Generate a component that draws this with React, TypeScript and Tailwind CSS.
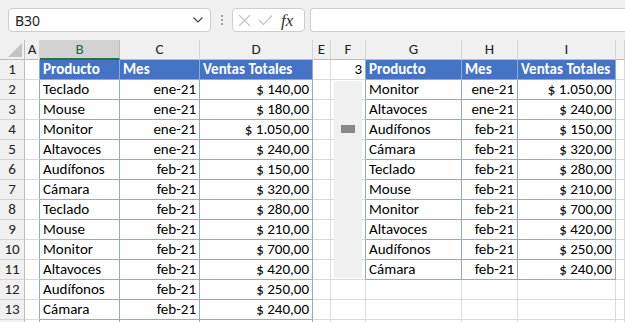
import React from "react";

const COLS = [25, 15, 80, 80, 113, 18, 35, 96, 56, 98];
const COL_LETTERS = ["", "A", "B", "C", "D", "E", "F", "G", "H", "I", ""];

const left: [string, string, string][] = [
  ["Teclado", "ene-21", "$ 140,00"],
  ["Mouse", "ene-21", "$ 180,00"],
  ["Monitor", "ene-21", "$ 1.050,00"],
  ["Altavoces", "ene-21", "$ 240,00"],
  ["Audífonos", "feb-21", "$ 150,00"],
  ["Cámara", "feb-21", "$ 320,00"],
  ["Teclado", "feb-21", "$ 280,00"],
  ["Mouse", "feb-21", "$ 210,00"],
  ["Monitor", "feb-21", "$ 700,00"],
  ["Altavoces", "feb-21", "$ 420,00"],
  ["Audífonos", "feb-21", "$ 250,00"],
  ["Cámara", "feb-21", "$ 240,00"],
];
const right: [string, string, string][] = [
  ["Monitor", "ene-21", "$ 1.050,00"],
  ["Altavoces", "ene-21", "$ 240,00"],
  ["Audífonos", "feb-21", "$ 150,00"],
  ["Cámara", "feb-21", "$ 320,00"],
  ["Teclado", "feb-21", "$ 280,00"],
  ["Mouse", "feb-21", "$ 210,00"],
  ["Monitor", "feb-21", "$ 700,00"],
  ["Altavoces", "feb-21", "$ 420,00"],
  ["Audífonos", "feb-21", "$ 250,00"],
  ["Cámara", "feb-21", "$ 240,00"],
];
const HDR = ["Producto", "Mes", "Ventas Totales"];

const inLeft = (r: number, c: number) => c >= 2 && c <= 4 && r >= 1 && r <= 14;
const inRight = (r: number, c: number) => c >= 7 && c <= 9 && r >= 1 && r <= 11;
const inT = (r: number, c: number) => inLeft(r, c) || inRight(r, c);

function cellContent(r: number, c: number): { text: string; align: "l" | "r"; bold?: boolean } | null {
  if (inLeft(r, c)) {
    const k = c - 2;
    if (r === 1) return { text: HDR[k], align: "l", bold: true };
    const row = left[r - 2];
    if (!row) return null;
    return { text: row[k], align: k === 0 ? "l" : "r" };
  }
  if (inRight(r, c)) {
    const k = c - 7;
    if (r === 1) return { text: HDR[k], align: "l", bold: true };
    const row = right[r - 2];
    if (!row) return null;
    return { text: row[k], align: k === 0 ? "l" : "r" };
  }
  if (r === 1 && c === 6) return { text: "3", align: "r" };
  return null;
}

const FONT = { fontFamily: "Calibri, Carlito, Lato, 'Liberation Sans', sans-serif" };

function Cell({ r, c }: { r: number; c: number }) {
  const content = cellContent(r, c);
  const hdr = inT(r, c) && r === 1;
  const rBlue = inT(r, c) || inT(r, c + 1);
  const bBlue = inT(r, c) || inT(r + 1, c);
  return (
    <div
      className={
        "h-[20px] border-r border-b overflow-hidden whitespace-nowrap text-[15px] leading-[19px] px-[3px] " +
        (rBlue ? "border-r-[#8ea9db] " : "border-r-[#dadada] ") +
        (bBlue ? "border-b-[#8ea9db] " : "border-b-[#dadada] ") +
        (hdr ? "bg-[#4472c4] text-white font-bold " : "bg-white text-black ") +
        (content?.align === "r" ? "text-right" : "text-left")
      }
      style={FONT}
    >
      {content?.text ?? ""}
    </div>
  );
}

function ColHeader({ c }: { c: number }) {
  if (c === 0) {
    return (
      <div className="relative h-[20px] border-r border-b border-r-[#bdbdbd] border-b-[#bdbdbd] bg-[#f0f0f0]">
        <svg className="absolute right-[2px] bottom-[2px]" width="14" height="14" viewBox="0 0 14 14">
          <polygon points="14,0 14,14 0,14" fill="#c3c3c3" />
        </svg>
      </div>
    );
  }
  const sel = c === 2;
  return (
    <div
      className={
        "h-[20px] flex items-center justify-center text-[15px] border-r " +
        (sel
          ? "bg-[#d2d2d2] text-[#1d6b3b] border-b-2 border-b-[#217346] border-r-[#bdbdbd]"
          : "bg-[#f0f0f0] text-[#222] border-b border-b-[#bdbdbd] border-r-[#d4d4d4]")
      }
      style={FONT}
    >
      {COL_LETTERS[c]}
    </div>
  );
}

function RowHeader({ r }: { r: number }) {
  return (
    <div
      className="h-[20px] flex items-center justify-center text-[15px] text-[#222] bg-[#f0f0f0] border-r border-b border-r-[#bdbdbd] border-b-[#d4d4d4]"
      style={FONT}
    >
      {r <= 13 ? r : ""}
    </div>
  );
}

export default function App() {
  const rows = Array.from({ length: 15 }, (_, i) => i);
  const cols = Array.from({ length: 11 }, (_, i) => i);
  return (
    <div className="w-[625px] h-[322px] overflow-hidden bg-[#f0f0f0] relative">
      {/* formula bar */}
      <div className="h-[40px] flex items-center pl-[8px]">
        <div
          className="w-[203px] h-[24px] bg-white border border-[#cdcdcd] rounded-[4px] flex items-center justify-between pl-[6px] pr-[6px] text-[14px] text-[#222]"
          style={{ fontFamily: "'Segoe UI', 'Noto Sans', 'Open Sans', sans-serif" }}
        >
          <span>B30</span>
          <svg width="12" height="8" viewBox="0 0 12 8">
            <path d="M1.5 1.5 L6 6 L10.5 1.5" fill="none" stroke="#444" strokeWidth="1.2" />
          </svg>
        </div>
        <div className="w-[21px] flex flex-col items-center gap-[2px]">
          <div className="w-[2px] h-[2px] bg-[#888] rounded-full" />
          <div className="w-[2px] h-[2px] bg-[#888] rounded-full" />
          <div className="w-[2px] h-[2px] bg-[#888] rounded-full" />
        </div>
        <div className="w-[73px] h-[24px] bg-white border border-[#cdcdcd] rounded-[4px] flex items-center pl-[5px] gap-[7px]">
          <svg width="13" height="13" viewBox="0 0 13 13">
            <path d="M1 1 L12 12 M12 1 L1 12" stroke="#c4c4c4" strokeWidth="1.1" fill="none" />
          </svg>
          <svg width="15" height="12" viewBox="0 0 15 12">
            <path d="M1 6 L5.5 10.5 L14 1.5" stroke="#c4c4c4" strokeWidth="1.1" fill="none" />
          </svg>
          <span
            className="italic text-[17px] leading-none text-[#333] ml-[1px]"
            style={{ fontFamily: "'Liberation Serif', 'DejaVu Serif', serif" }}
          >
            fx
          </span>
        </div>
        <div className="ml-[5px] flex-1 h-[24px] bg-white border border-[#cdcdcd] rounded-l-[4px] border-r-0" />
      </div>

      {/* grid */}
      <div
        className="grid bg-white"
        style={{ gridTemplateColumns: COLS.map((w) => w + "px").join(" ") + " 1fr" }}
      >
        {rows.map((r) =>
          cols.map((c) => {
            if (r === 0) return <ColHeader key={`${r}-${c}`} c={c} />;
            if (c === 0) return <RowHeader key={`${r}-${c}`} r={r} />;
            return <Cell key={`${r}-${c}`} r={r} c={c} />;
          })
        )}
      </div>

      {/* form control overlay in column F */}
      <div className="absolute left-[334px] top-[81px] w-[28px] h-[197px] bg-[#f0f0f0]">
        <div className="absolute left-[7px] top-[44px] w-[14px] h-[8px] bg-[#888888]" />
      </div>
    </div>
  );
}
